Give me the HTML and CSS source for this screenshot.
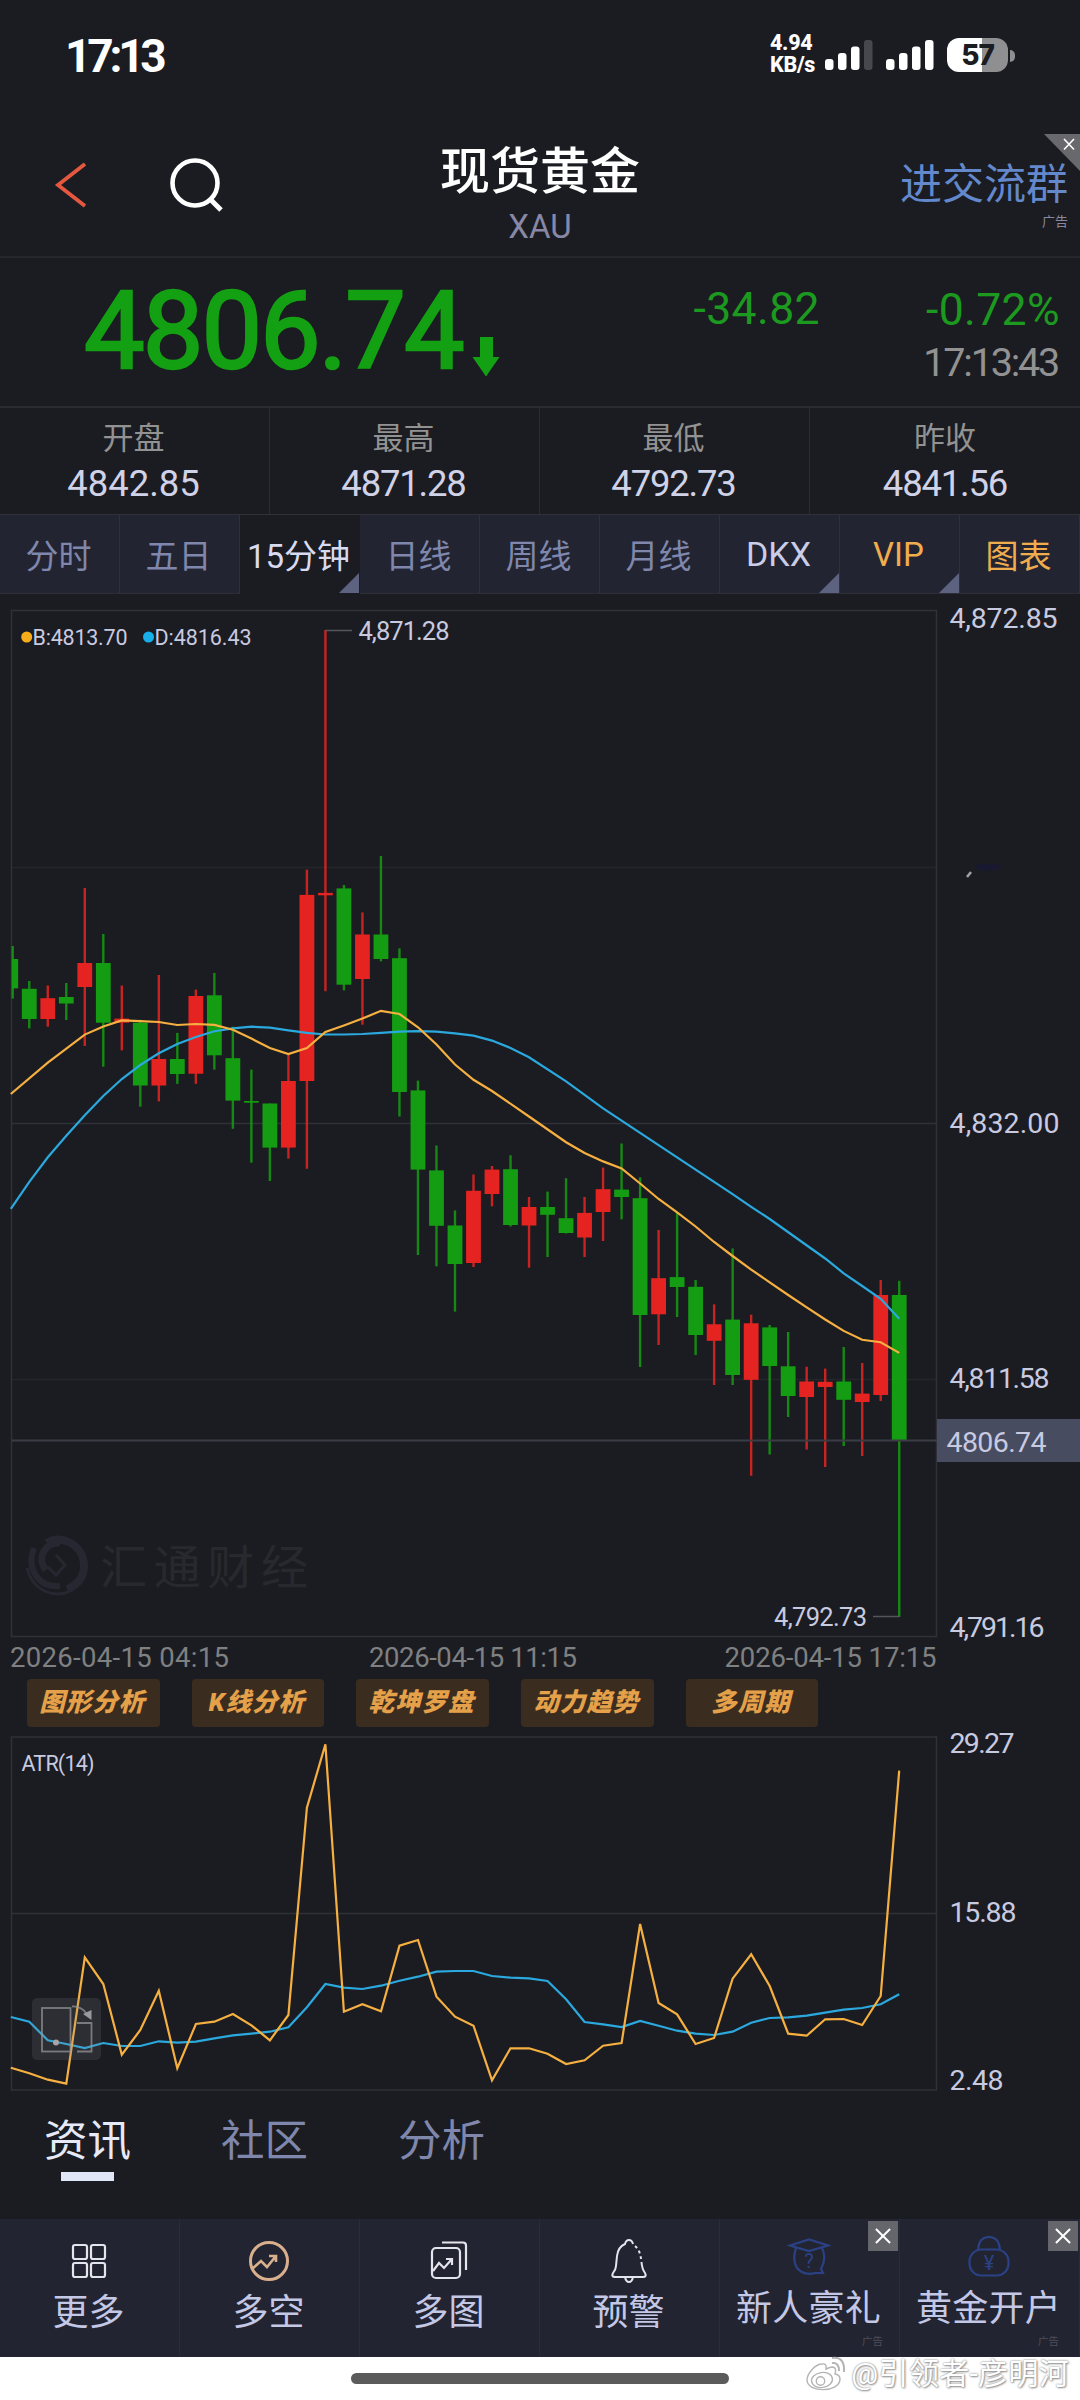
FILE: index.html
```html
<!DOCTYPE html>
<html lang="zh-CN">
<head>
<meta charset="utf-8">
<title>现货黄金 XAU</title>
<link rel="stylesheet" href="styles.css">
</head>
<body>
<div class="statusbar">
  <span class="clock">17:13</span>
  <div class="status-right">
    <div class="netspeed"><span>4.94</span><span>KB/s</span></div>
    <svg class="signal" width="48" height="32" viewBox="0 0 48 32"><g fill="#fff"><rect x="0" y="20" width="8.5" height="11" rx="3"/><rect x="13" y="14" width="8.5" height="17" rx="3"/><rect x="26" y="7.500" width="8.500" height="23.500" rx="3"/></g><rect x="39" y="1" width="8.500" height="30" rx="3" fill="#47484d"/></svg>
    <svg class="signal" width="48" height="32" viewBox="0 0 48 32"><g fill="#fff"><rect x="0" y="20" width="8.500" height="11" rx="3"/><rect x="13" y="14" width="8.500" height="17" rx="3"/><rect x="26" y="7.500" width="8.500" height="23.500" rx="3"/><rect x="39" y="1" width="8.500" height="30" rx="3"/></g></svg>
    <div class="battery"><span>57</span></div>
    <i class="battery-cap"></i>
  </div>
</div>

<header class="header">
  <div class="header-left">
    <svg width="34" height="48" viewBox="0 0 34 48"><path d="M31 3 L4 24 L31 45" fill="none" stroke="#e5583f" stroke-width="3.800"/></svg>
    <svg class="search" width="56" height="56" viewBox="0 0 56 56" fill="none" stroke="#fff" stroke-width="4.600"><circle cx="26" cy="26" r="22.500"/><path d="M41 42 L52 53" stroke-width="5"/></svg>
  </div>
  <div class="header-title"><h1>现货黄金</h1><p>XAU</p></div>
  <div class="header-ad">
    <a class="join">进交流群</a><small>广告</small>
    <svg class="corner-close" width="36" height="37" viewBox="0 0 36 37"><path d="M0 0H36V37Z" fill="#69696d"/><path d="M20 5 L30 15.500 M30 5 L20 15.500" stroke="#fff" stroke-width="1.600"/></svg>
  </div>
</header>

<section class="quote">
  <div class="price"><span>4806.74</span>
    <svg width="28" height="40" viewBox="0 0 28 40"><path d="M8 0H21V20H27.500L14 39.500L0.500 20H8Z" fill="#13a013"/></svg>
  </div>
  <div class="change">-34.82</div>
  <div class="percent"><span>-0.72%</span><time>17:13:43</time></div>
</section>

<section class="stats">
  <div class="stat"><span>开盘</span><b>4842.85</b></div>
  <div class="stat"><span>最高</span><b class="tight">4871.28</b></div>
  <div class="stat"><span>最低</span><b class="tight">4792.73</b></div>
  <div class="stat"><span>昨收</span><b class="tight">4841.56</b></div>
</section>

<nav class="periods">
  <a>分时</a><a>五日</a><a class="active more">15分钟</a><a>日线</a><a>周线</a><a>月线</a><a class="bright more">DKX</a><a class="gold more">VIP</a><a class="gold">图表</a>
</nav>

<svg class="chart" width="1080" height="1078" viewBox="0 594 1080 1078">
  <g class="frame">
    <path class="faint" d="M12 867.500H937M12 1379.500H937"/><path d="M12 1123.500H937"/>
    <rect x="11.500" y="610.500" width="925" height="1026"/>
  </g>
  <g class="mark" fill="none" stroke="#272732">
    <path d="M47 1543 C58 1534 84 1543 84 1566 C84 1578 76 1586 67 1589" stroke-width="8"/>
    <path d="M46 1570 C36 1558 45 1542 60 1543" stroke-width="7"/>
    <path d="M34 1548 C26 1568 38 1588 60 1586" stroke-width="6"/>
    <path d="M27 1568 C32 1590 54 1600 72 1590" stroke-width="3"/>
    <path d="M56 1555 L65 1565 L56 1575 L48 1567" stroke-width="3"/>
  </g>
  <text class="mark-text" x="100" y="1584" textLength="208">汇通财经</text>
  <g id="candles"></g>
  <path d="M12 1440.500H937" stroke="#3b3c46" stroke-width="2"/>
  <polyline id="line-d" class="line blue"/>
  <polyline id="line-b" class="line orange"/>
  <path d="M325 630.500H352M873 1616.500H899" stroke="#55565c" stroke-width="1.500"/>
  <g class="label">
    <circle cx="26.700" cy="637" r="5.500" fill="#f8ae1a"/><circle cx="148.500" cy="637" r="5.500" fill="#18aee8"/>
    <text class="s21" x="32.500" y="645" textLength="95">B:4813.70</text>
    <text class="s21" x="154.500" y="645" textLength="97">D:4816.43</text>
    <text class="s25" x="358.500" y="639.500" textLength="91">4,871.28</text>
    <text class="s25" x="774" y="1625.500" textLength="93">4,792.73</text>
    <text x="949.500" y="627.500" textLength="108">4,872.85</text>
    <text x="949.500" y="1132.500" textLength="110">4,832.00</text>
    <text x="949.500" y="1388" textLength="100">4,811.58</text>
    <text x="949.500" y="1637" textLength="95">4,791.16</text>
  </g>
  <ellipse cx="988" cy="867" rx="13" ry="3.500" fill="#181930"/><path d="M967 877 L971 872" stroke="#a0a2ab" stroke-width="2.500"/>
  <rect x="937" y="1419" width="143" height="43" fill="#474c61"/>
  <text class="tag" x="946.500" y="1451.500" textLength="100">4806.74</text>
  <g class="dates">
    <text x="10" y="1666.500" textLength="219">2026-04-15 04:15</text>
    <text x="369" y="1666.500" textLength="208">2026-04-15 11:15</text>
    <text x="724.500" y="1666.500" textLength="212">2026-04-15 17:15</text>
  </g>
</svg>

<div class="tools"><a>图形分析</a><a>K线分析</a><a>乾坤罗盘</a><a>动力趋势</a><a>多周期</a></div>

<svg class="chart" width="1080" height="370" viewBox="0 1730 1080 370">
  <g class="frame"><path d="M12 1913.500H937"/><rect x="11.500" y="1737" width="925" height="353"/></g>
  <polyline id="atr-avg" class="line blue"/>
  <polyline id="atr" class="line orange"/>
  <g class="label">
    <text class="s21" x="21.500" y="1771" textLength="73">ATR(14)</text>
    <text x="949.500" y="1752.500" textLength="65">29.27</text>
    <text x="949.500" y="1922" textLength="67">15.88</text>
    <text x="949.500" y="2090" textLength="54">2.48</text>
  </g>
  <g fill="none" stroke="#9a9a9c" stroke-opacity=".72" stroke-width="1.800">
    <rect x="32" y="1998" width="69" height="62" rx="5" fill="#8a8a90" fill-opacity=".17" stroke="none"/>
    <rect x="42" y="2008" width="28.500" height="43.500"/>
    <path d="M77 2023H91.500V2051.500H77M72 2006.500Q81 2006 87 2014"/>
    <path d="M91.500 2010V2020L83 2014Z" fill="#9a9a9c" stroke="none"/><circle cx="56" cy="2042.500" r="3" fill="#a5a5a8" stroke="none"/>
  </g>
</svg>

<nav class="feed"><a class="on">资讯</a><a>社区</a><a>分析</a></nav>

<footer class="bottom">
  <a><svg width="44" height="44" viewBox="0 0 44 44" fill="none" stroke="#e4e4ec" stroke-width="2.200"><rect x="6" y="6" width="14" height="14" rx="2"/><rect x="24" y="6" width="14" height="14" rx="2"/><rect x="6" y="24" width="14" height="14" rx="2"/><rect x="24" y="24" width="14" height="14" rx="2"/></svg><span>更多</span></a>
  <a><svg width="44" height="44" viewBox="0 0 44 44" fill="none" stroke="#d9b08d" stroke-width="3"><circle cx="22" cy="22" r="18.500"/><path d="M5 30L14 22L20 28L29 17M22 17H29V23" stroke-width="2.600"/></svg><span>多空</span></a>
  <a><svg width="44" height="44" viewBox="0 0 44 44" fill="none" stroke="#e4e4ec" stroke-width="2.200"><rect x="5" y="9" width="28" height="30" rx="4"/><path d="M15 3.500H36Q39 3.500 39 6.500V31M6 32L12 24L17 29L25 20M19 20H25V26"/></svg><span>多图</span></a>
  <a><svg width="44" height="44" viewBox="0 0 44 44" fill="none" stroke="#e4e4ec" stroke-width="2"><path d="M26 5Q25 1 22 1T18 5Q11 8 10 17L9 27Q9 30 6 34Q4 38 8 38H36Q40 38 38 34Q35 30 34.500 23"/><path d="M28 7Q33 11 34 20" stroke-dasharray="3 3"/><path d="M18 38Q19 43 22 43T26 38"/></svg><span>预警</span></a>
  <a class="promo"><svg width="44" height="44" viewBox="0 0 44 44" fill="none" stroke="#2a4285" stroke-width="2.200"><path d="M3 9.500L22 3.500L41 9.500L22 15ZM9 12Q5 24 10 32Q17 40 28 37L36 37L34 33Q40 22 35 12"/><text x="22" y="32" text-anchor="middle" font-size="20" fill="#2a4285" stroke="none">?</text></svg><span>新人豪礼</span><small>广告</small><i class="close"></i></a>
  <a class="promo"><svg width="44" height="44" viewBox="0 0 44 44" fill="none" stroke="#2a4285" stroke-width="2.200"><rect x="2.500" y="13.500" width="39" height="26" rx="12"/><path d="M11 13.500Q12 1 22 1T33 13.500"/><text x="22" y="34" text-anchor="middle" font-size="20" fill="#2a4285" stroke="none">¥</text></svg><span>黄金开户</span><small class="second">广告</small><i class="close"></i></a>
</footer>

<div class="homebar"><i class="pill"></i>
  <div class="watermark">
    <svg width="44" height="38" viewBox="0 0 44 38" fill="#fff" stroke="#b4b4b4" stroke-width="1.400"><path d="M17 9C10 9 2 19 2 25C2 38 35 38 35 24Q35 20 30 19Q32 13 28 12Q25 12 21 14Q22 8 17 9Z"/><ellipse cx="17" cy="25" rx="10.500" ry="7.500" transform="rotate(-8 17 25)"/><circle cx="15.500" cy="26" r="4.200"/><path d="M27 8Q34 7 34 16M27 3Q40 1 39 17" fill="none" stroke-width="2"/></svg>
    <span>@引领者-彦明河</span>
  </div>
</div>
<script src="chart.js"></script>
</body>
</html>
```
FILE: styles.css
```css
* { box-sizing: border-box; }
body { margin: 0; width: 1080px; height: 2400px; overflow: hidden; background: #1b1c21; color: #fff; font-family: Roboto, "Noto Sans CJK SC", sans-serif; }
a { color: inherit; text-decoration: none; }
svg { display: block; flex: none; }

.statusbar { height: 110px; padding: 0 65px 0 65px; display: flex; justify-content: space-between; }
.clock { font-size: 46px; font-weight: 700; line-height: 112px; letter-spacing: -4.200px; }
.status-right { display: flex; align-items: flex-start; padding-top: 39px; }
.netspeed { display: flex; flex-direction: column; width: 55px; margin-top: -7px; font-size: 21.500px; font-weight: 800; line-height: 22px; letter-spacing: -.3px; }
.signal { margin-right: 13px; }
.battery { width: 61px; height: 34px; margin-top: -1px; border-radius: 12px; background: linear-gradient(90deg, #fff 57%, #8f8f92 57%); color: #1b1c21; text-align: center; font: 800 28px/35px Inter, sans-serif; letter-spacing: -1px; }
.battery-cap { width: 5px; height: 12px; margin: 11px 0 0 2px; border-radius: 0 6px 6px 0; background: #8f8f92; }

.header { height: 148px; display: grid; grid-template-columns: 1fr 400px 1fr; border-bottom: 2px solid #26272c; }
.header-left { display: flex; padding: 51px 0 0 54px; }
.search { margin: -4px 0 0 81px; }
.header-title { text-align: center; padding-top: 26px; }
h1 { margin: 0; font-size: 50px; line-height: 72px; font-weight: 500; }
.header-title p { margin: 0; padding-top: 1px; font-size: 33px; line-height: 36px; color: #8888a6; }
.header-ad { position: relative; display: flex; flex-direction: column; align-items: flex-end; padding: 48px 12px 0 0; color: #6388cc; }
.join { font-size: 42px; line-height: 54px; }
.header-ad small { font-size: 13px; line-height: 20px; color: #8888a0; }
.corner-close { position: absolute; right: 0; top: 24px; }

.quote { height: 150px; display: flex; border-bottom: 2px solid #2b2c31; color: #13a013; }
.price { width: 600px; padding-left: 84px; display: flex; font-size: 108px; line-height: 147px; letter-spacing: -2px; -webkit-text-stroke: 2.400px #13a013; }
.price svg { margin: 79px 0 0 9px; }
.change { width: 220px; text-align: right; font-size: 44.500px; line-height: 103px; letter-spacing: .4px; color: #1c9a20; }
.percent { flex: 1; padding: 27px 20px 0 0; display: flex; flex-direction: column; align-items: flex-end; font-size: 44.500px; line-height: 50px; letter-spacing: .4px; color: #1c9a20; }
time { font-size: 39.500px; line-height: 52px; padding: 2px 2px 0 0; letter-spacing: -2.200px; color: #929292; }

.stats { height: 107px; display: grid; grid-template-columns: repeat(4, 1fr); border-bottom: 1px solid #303137; }
.stat { display: flex; flex-direction: column; align-items: center; border-right: 1px solid #2c2d33; padding-right: 2px; }
.stat:last-child { border: 0; padding: 0; }
.stat span { margin-top: 10px; font-size: 31px; line-height: 42px; color: #929292; }
.stat b { font-size: 36.500px; font-weight: 400; line-height: 48px; color: #d0d2e8; }
.stat .tight { letter-spacing: -1.200px; }

.periods { height: 79px; display: grid; grid-template-columns: repeat(9, 1fr); }
.periods a { position: relative; display: flex; align-items: center; justify-content: center; padding-right: 2px; background: #232431; border-right: 1px solid #2f3038; border-bottom: 1px solid #2d2e36; font-size: 33px; color: #7f87ad; white-space: nowrap; }
.periods .active { background: #1b1c21; color: #d8daf0; border-color: #1b1c21; }
.periods .bright { color: #c9cde8; font-size: 34px; }
.periods .gold { color: #f0ad4e; }
.more::after { content: ""; position: absolute; right: 0; bottom: 0; border: 10px solid; border-color: transparent #5c6280 #5c6280 transparent; }

.chart { overflow: visible; }
.frame { fill: none; stroke: #303138; stroke-width: 1.500; }
.frame .faint { stroke: #24252b; }
.label { font-size: 28.500px; fill: #c8cae0; }
.s21 { font-size: 21.500px; }
.s25 { font-size: 25.500px; }
.tag { font-size: 28.500px; fill: #c8cae0; }
.dates { font-size: 27.500px; fill: #7f8082; }
.mark-text { font-size: 47px; fill: #28292e; }
.line { fill: none; stroke-width: 2.200; }
.orange { stroke: #f5b041; }
.blue { stroke: #2ba9de; }
.up { fill: #e52421; }
.down { fill: #149c12; }

.tools { height: 58px; padding: 7px 0 0 27px; display: flex; gap: 32.200px; }
.tools a { width: 132.500px; height: 48px; padding-right: 2px; border-radius: 4px; background: #3a2d20; color: #e5a04a; text-align: center; font-size: 25.500px; line-height: 47px; font-weight: 900; font-style: italic; letter-spacing: 1px; }

.feed { height: 119px; padding: 12px 0 0 44px; display: flex; gap: 90px; font-size: 43.500px; line-height: 60px; color: #7f87ad; }
.feed .on { color: #e6eaf8; }
.on::after { content: ""; display: block; width: 53px; height: 9px; margin: 0 auto; background: #e0e8f8; }

.bottom { height: 138px; display: grid; grid-template-columns: repeat(6, 1fr); background: #232431; }
.bottom a { position: relative; display: flex; flex-direction: column; align-items: center; padding: 20px 2px 0 0; border-right: 1px solid #2b2c38; font-size: 36px; line-height: 50px; color: #c3c8e6; }
.bottom svg { margin-bottom: 5px; }
.bottom .promo svg { margin: -3px 0 4px; }
.promo span { white-space: nowrap; letter-spacing: .3px; }
.bottom small { position: absolute; right: 16px; bottom: 6px; font-size: 10.500px; line-height: 18px; color: #4d4e5b; }
.bottom .second { right: 20px; }
.close { position: absolute; right: 1px; top: 2px; width: 30px; height: 30px; background: #65666c; }
.close::before, .close::after { content: ""; position: absolute; left: 5px; top: 14px; width: 20px; height: 2px; background: #fff; transform: rotate(45deg); }
.close::after { transform: rotate(-45deg); }

.homebar { position: relative; height: 43px; background: #fff; }
.pill { display: block; width: 378px; height: 11px; margin: 0 auto; border-radius: 6px; background: #5b5b5b; transform: translateY(16px); }
.watermark { position: absolute; right: 11px; top: -2px; display: flex; align-items: center; gap: 2px; font-size: 30px; line-height: 38px; letter-spacing: .3px; color: #fff; text-shadow: 0 0 2px #777, 1px 1px 2px #999; }
```
FILE: chart.js
```js
const STEP = 18.51;
const X0 = 10.75;
const xAt = i => X0 + STEP * i;

// [direction, high, body top, body bottom, low] in chart units, one row per 15-minute bar
const bars = [
  ['d', 946, 959, 988.4, 998.6], ['d', 981, 988.8, 1019, 1028.4], ['u', 985.5, 998.2, 1019, 1026.7], ['d', 983, 997, 1003.5, 1020],
  ['u', 888, 963, 987, 1046], ['d', 934, 963, 1022.7, 1066.7], ['u', 985.5, 1018.6, 1022.7, 1050.4], ['d', 1019.8, 1022.7, 1085.5, 1106.7],
  ['u', 975, 1059, 1085.5, 1101.4], ['d', 1032.9, 1059, 1074, 1083.9], ['u', 989.6, 996, 1073.7, 1083.9], ['d', 972.9, 995.3, 1055.3, 1069.6],
  ['d', 1026.7, 1058.2, 1100.6, 1128.8], ['d', 1069.6, 1101, 1102.7, 1162.7], ['d', 1103.5, 1103.5, 1147.6, 1181], ['u', 1053.3, 1081, 1147.6, 1158.6],
  ['u', 869.6, 894.9, 1081, 1168.8], ['u', 630, 892.9, 895.3, 991.2], ['d', 885, 888.4, 984.7, 990.4], ['u', 912.4, 934.5, 979, 1024.7],
  ['d', 856, 934.5, 959, 961.4], ['d', 948.4, 958.2, 1092, 1116.5], ['d', 1080.6, 1090.4, 1169.6, 1255], ['d', 1145.5, 1170.4, 1225.8, 1266.3],
  ['d', 1210.4, 1225.5, 1264, 1311.6], ['u', 1174.5, 1190.8, 1263, 1267], ['u', 1166, 1169.6, 1194, 1206.3], ['d', 1155.3, 1169.2, 1225, 1226.5],
  ['u', 1197, 1207, 1225.5, 1267.7], ['d', 1191.6, 1207, 1214.8, 1257], ['d', 1178.2, 1218.2, 1233, 1233.5], ['u', 1197, 1212.9, 1237.5, 1257],
  ['u', 1167.6, 1189.2, 1212, 1241], ['d', 1143.5, 1189.6, 1197, 1219.4], ['d', 1177.3, 1198.2, 1315, 1367], ['u', 1230, 1278.2, 1314.3, 1345],
  ['d', 1213, 1277.1, 1287, 1317], ['d', 1280, 1286.8, 1335, 1355], ['u', 1304.3, 1324.3, 1340.8, 1385], ['d', 1248.5, 1319.6, 1375, 1385],
  ['u', 1314.7, 1323.3, 1379.8, 1475.8], ['d', 1325, 1327.4, 1366, 1454.5], ['d', 1332, 1366.3, 1396, 1417], ['u', 1366.7, 1381.5, 1397, 1449.5],
  ['u', 1368.6, 1381.8, 1387, 1467], ['d', 1347, 1381.5, 1399.8, 1446], ['u', 1363, 1393.6, 1402, 1456], ['u', 1280, 1295, 1395, 1401],
  ['d', 1280.8, 1295, 1440, 1617]
];

// null entries are skipped, the line runs straight through them
const series = {
  'line-b': [1094, null, 1062.7, null, 1034.6, 1026.5, 1020.4, 1021.2, 1022, 1025, 1024, 1024.9, 1029.8, 1038.6, 1048, 1054, 1048, 1032, 1025.5, 1018.6, 1010.8, 1014, 1027.3, 1044.5, 1064.5, 1079.8, 1091, null, 1116.5, null, 1142.2, 1153, 1161.4, 1168.4, 1183.5, 1199, 1212.4, 1226.5, 1242, 1256, 1269.6, 1282.3, 1295, 1307.4, 1319.5, 1330.9, 1339.8, 1342.2, 1352.9],
  'line-d': [1208.8, 1181.8, 1157.3, 1135.7, 1115.3, 1096, 1079, 1065, 1053.3, 1043.9, 1037, 1031.2, 1028.4, 1026.7, 1027.6, 1030.4, 1032.9, 1034.5, 1034.5, 1034, 1032.9, 1031.6, 1031.2, 1031.6, 1033.3, 1035.7, 1040.6, 1048, 1057.3, null, 1081.4, null, 1108.4, 1120.6, null, null, 1157.3, null, null, 1194.2, 1206.8, 1219, null, null, 1258.5, 1273.3, 1286, 1298.8, 1318.8],
  'atr': [2067.7, 2073.3, 2079.7, 2083.7, 1957.3, 1984, 2054.7, 2030, 1990.7, 2068.3, 2024, 2021.7, 2014, 2025.3, 2040.3, 2015, 1807.7, 1744.3, 2011.7, 2004.3, 2011.3, 1945.7, 1940, 1996.7, 2016.7, 2025.7, 2080.3, 2048.3, 2048.3, 2053.7, 2064, 2060.3, 2045.7, 2043, 1924, 2003, 2014.3, 2044, 2038, 1978.7, 1954.3, 1986, 2033.7, 2035.7, 2019.3, 2019, 2025, 1996, 1770.7],
  'atr-avg': [2017, 2021.7, 2040.3, 2044, 2048, 2043, 2046, 2046, 2041.3, 2042.7, 2041.7, 2038.3, 2035.3, 2033.7, 2031.7, 2027.3, 2007.3, 1984, 1987.7, 1989, 1985.7, 1980.7, 1976.7, 1971.7, 1971, 1971, 1976, 1977.7, 1978.3, 1981, 1999.3, 2022, 2024.3, 2027, 2021, 2025.7, 2030.7, 2033.7, 2035, 2031.7, 2022.7, 2018, 2017.3, 2015.7, 2012.7, 2009.7, 2008, 2004.3, 1994.3]
};

function rect(cls, x, y, w, h) {
  const r = document.createElementNS('http://www.w3.org/2000/svg', 'rect');
  r.setAttribute('class', cls);
  r.setAttribute('x', x); r.setAttribute('y', y);
  r.setAttribute('width', w); r.setAttribute('height', Math.max(h, 1.5));
  return r;
}

const candles = document.getElementById('candles');
bars.forEach(([dir, high, top, bottom, low], i) => {
  const cls = dir === 'u' ? 'up' : 'down';
  const left = Math.max(xAt(i) - 7.4, 12);
  const wick = rect(cls, Math.max(xAt(i) - 1.2, 11.5), high, 2.4, low - high);
  wick.setAttribute('opacity', '.85');
  candles.append(wick, rect(cls, left, top, xAt(i) + 7.4 - left, bottom - top));
});

for (const [id, values] of Object.entries(series)) {
  const points = values.map((y, i) => y === null ? '' : `${xAt(i).toFixed(1)},${y}`).join(' ');
  document.getElementById(id).setAttribute('points', points);
}
```
